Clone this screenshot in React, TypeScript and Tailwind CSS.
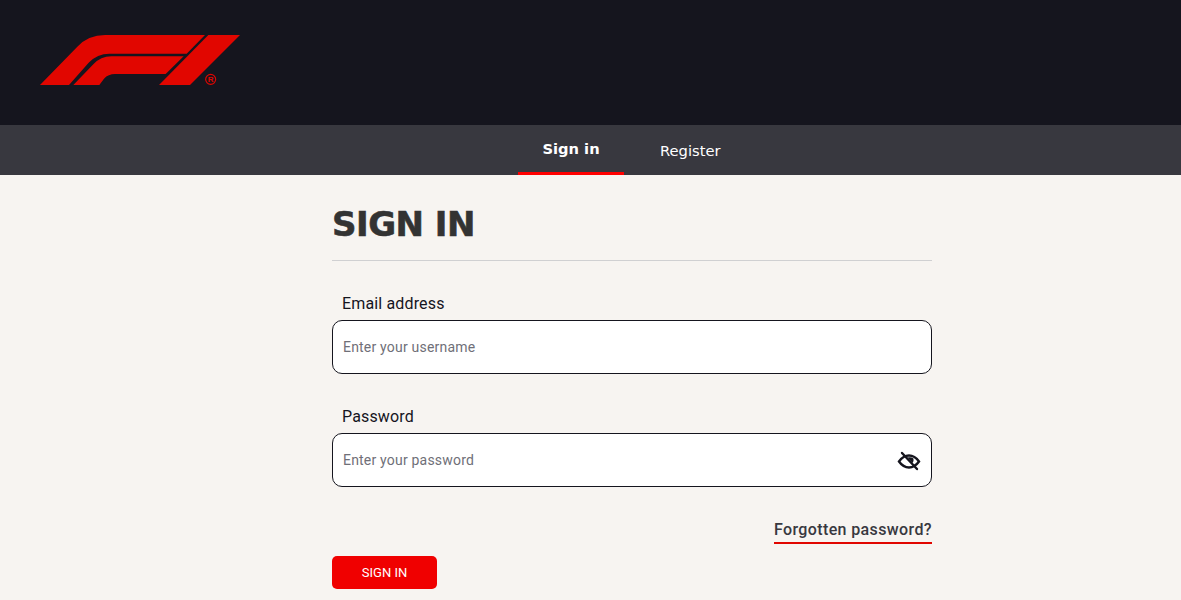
const bodyFont = "font-['Roboto','Noto_Sans',sans-serif]";

function F1Logo() {
  return (
    <svg width="240" height="80" viewBox="0 0 720 240" className="block">
      <path
        d="M60 195 L172 80 Q205 45 255 45 L555 45 L500 101 L268 101 Q232 101 206 128 L147 195 Z"
        fill="#e10600"
      />
      <path
        d="M160 195 L220 133 Q242 109 274 109 L491 109 L437 162 L285 162 Q265 162 252 176 L238 195 Z"
        fill="#e10600"
      />
      <path d="M565 45 L660 45 L510 195 L417 195 Z" fill="#e10600" />
      <circle cx="572" cy="178" r="15" fill="none" stroke="#e10600" strokeWidth="3.5" />
      <text x="572" y="187" textAnchor="middle" fontSize="24" fontWeight="700" fontFamily="Liberation Sans, sans-serif" fill="#e10600">
        R
      </text>
    </svg>
  );
}

function EyeOffIcon() {
  return (
    <svg width="24" height="24" viewBox="0 0 24 24" fill="none" stroke="#15151e" strokeWidth="2.4" strokeLinecap="round">
      <path d="M2 13.5 C4.5 10 8 7.5 12 7.5 C16 7.5 19.5 10 22 13.5 C19.5 17 16 19.5 12 19.5 C8 19.5 4.5 17 2 13.5 Z" />
      <path d="M10.5 9.5 Q14 8.5 16.5 10.5 Q17 13 15.5 15 Z" fill="#15151e" stroke="none" />
      <path d="M5 5 L20 21" />
    </svg>
  );
}

function Field({ label, placeholder, icon }: { label: string; placeholder: string; icon?: boolean }) {
  return (
    <div>
      <label className="block pl-[10px] text-[16px] leading-[24px] pt-[1px] mb-[4px] tracking-[0.15px] text-[#15151e]">{label}</label>
      <div className="flex items-center h-[54px] bg-white border border-[#15151e] rounded-[10px] pl-[10px] pr-[10px]">
        <span className="flex-1 text-[14px] tracking-[0.2px] text-[#6f6f78]">{placeholder}</span>
        {icon && <EyeOffIcon />}
      </div>
    </div>
  );
}

export default function App() {
  return (
    <div className={`h-[600px] overflow-hidden bg-[#f7f4f1] ${bodyFont}`}>
      <header className="h-[125px] bg-[#15151e] pl-[20px] pt-[20px]">
        <F1Logo />
      </header>

      <nav className="h-[50px] bg-[#38383f] pl-[518px] flex font-['DejaVu_Sans',sans-serif] text-white">
        <a className="w-[106px] flex items-center justify-center border-b-[3px] border-[#ff0000] text-[14.7px] font-bold pt-[1px]">
          Sign in
        </a>
        <a className="ml-[36px] flex items-center text-[14.7px] pt-[3px]">Register</a>
      </nav>

      <main className="ml-[332px] w-[600px] pt-[24px]">
        <h1 className="font-['DejaVu_Sans',sans-serif] font-bold text-[34px] leading-[48px] tracking-[-0.5px] [-webkit-text-stroke:0.6px_#333333] text-[#333333] pt-[1px] pb-[12px] border-b border-[#d0d0d2]">
          SIGN IN
        </h1>
        <form className="pt-[30px]">
          <Field label="Email address" placeholder="Enter your username" />
          <div className="mt-[30px]">
            <Field label="Password" placeholder="Enter your password" icon />
          </div>
          <div className="flex justify-end mt-[30px]">
            <a className="text-[16px] font-medium leading-[24px] tracking-[0.38px] pt-[1px] text-[#38383f] border-b-2 border-[#e10600]">
              Forgotten password?
            </a>
          </div>
          <button
            type="button"
            className="block mt-[12px] w-[105px] h-[33px] bg-[#f00000] rounded-[5px] text-white text-[13px]"
          >
            SIGN IN
          </button>
        </form>
      </main>
    </div>
  );
}
